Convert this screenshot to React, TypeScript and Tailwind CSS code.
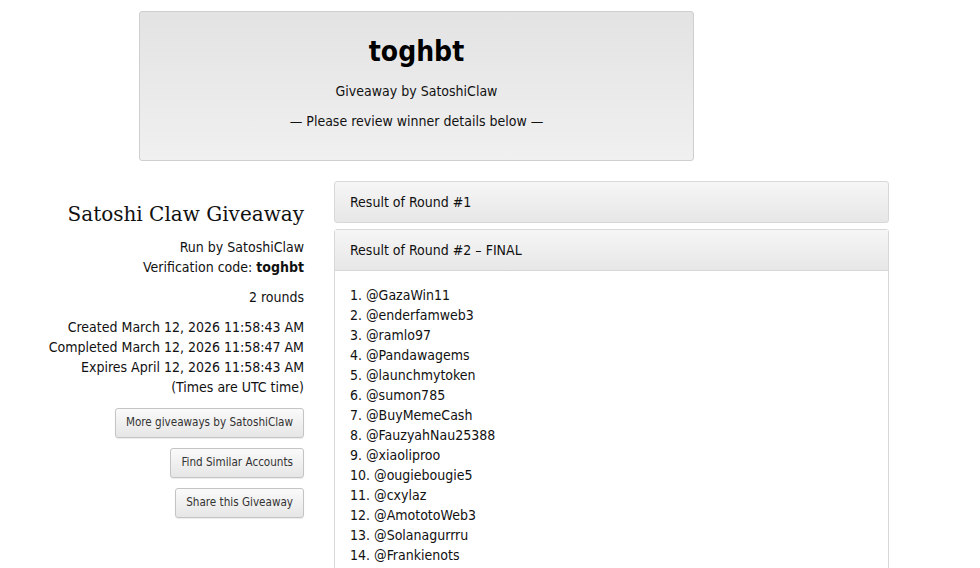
import React from 'react';

const WINNERS = [
    '@GazaWin11',
    '@enderfamweb3',
    '@ramlo97',
    '@Pandawagems',
    '@launchmytoken',
    '@sumon785',
    '@BuyMemeCash',
    '@FauzyahNau25388',
    '@xiaoliproo',
    '@ougiebougie5',
    '@cxylaz',
    '@AmototoWeb3',
    '@Solanagurrru',
    '@Frankienots',
];

const btn =
    'rounded-[3px] border border-[#c4c4c4] bg-gradient-to-b from-[#fafafa] to-[#e6e6e6] px-[10px] h-[30px] text-[11.6px] text-[#333] shadow-[0_1px_1px_rgba(0,0,0,0.08)]';

export default function App() {
    return (
        <div className="h-screen overflow-hidden bg-white text-[#111] font-['DejaVu_Sans_Condensed','DejaVu_Sans',sans-serif] text-[14px]">
            {/* Banner */}
            <div className="pt-[11px] pl-[139px]">
                <div className="w-[555px] h-[150px] rounded-[3px] border border-[#cfcfcf] bg-gradient-to-b from-[#e3e3e3] to-[#f0f0f0] flex flex-col items-center pt-[22px]">
                    <h1 className="text-[28px] font-bold leading-[36px] text-black">toghbt</h1>
                    <p className="mt-[12px] leading-[18px]">Giveaway by SatoshiClaw</p>
                    <p className="mt-[12px] leading-[18px]">— Please review winner details below —</p>
                </div>
            </div>

            <div className="flex pt-[20px]">
                {/* Left column */}
                <div className="w-[304px] flex flex-col items-end text-right">
                    <h2 className="mt-[18px] font-['DejaVu_Serif','Liberation_Serif',serif] text-[20px] leading-[30px] text-[#111]">
                        Satoshi Claw Giveaway
                    </h2>
                    <div className="mt-[8px] leading-[20px]">
                        <div>Run by SatoshiClaw</div>
                        <div>
                            Verification code: <b>toghbt</b>
                        </div>
                    </div>
                    <div className="mt-[10px] leading-[20px]">2 rounds</div>
                    <div className="mt-[10px] leading-[20px]">
                        <div>Created March 12, 2026 11:58:43 AM</div>
                        <div>Completed March 12, 2026 11:58:47 AM</div>
                        <div>Expires April 12, 2026 11:58:43 AM</div>
                        <div>(Times are UTC time)</div>
                    </div>
                    <div className="mt-[11px] flex flex-col items-end gap-[10px]">
                        <button className={btn}>More giveaways by SatoshiClaw</button>
                        <button className={btn}>Find Similar Accounts</button>
                        <button className={btn}>Share this Giveaway</button>
                    </div>
                </div>

                {/* Right column */}
                <div className="ml-[30px] w-[555px] flex flex-col gap-[6px]">
                    <div className="h-[42px] rounded-[3px] border border-[#d8d8d8] bg-gradient-to-b from-[#f6f6f6] to-[#e7e7e7] flex items-center px-[15px]">
                        Result of Round #1
                    </div>
                    <div className="rounded-t-[3px] border border-[#d8d8d8]">
                        <div className="h-[41px] border-b border-[#d8d8d8] bg-gradient-to-b from-[#f6f6f6] to-[#e7e7e7] flex items-center px-[15px]">
                            Result of Round #2 – FINAL
                        </div>
                        <ol className="pt-[14px] pb-[40px] pl-[15px] leading-[20px]">
                            {WINNERS.map((w, i) => (
                                <li key={w}>
                                    {i + 1}. {w}
                                </li>
                            ))}
                        </ol>
                    </div>
                </div>
            </div>
        </div>
    );
}
